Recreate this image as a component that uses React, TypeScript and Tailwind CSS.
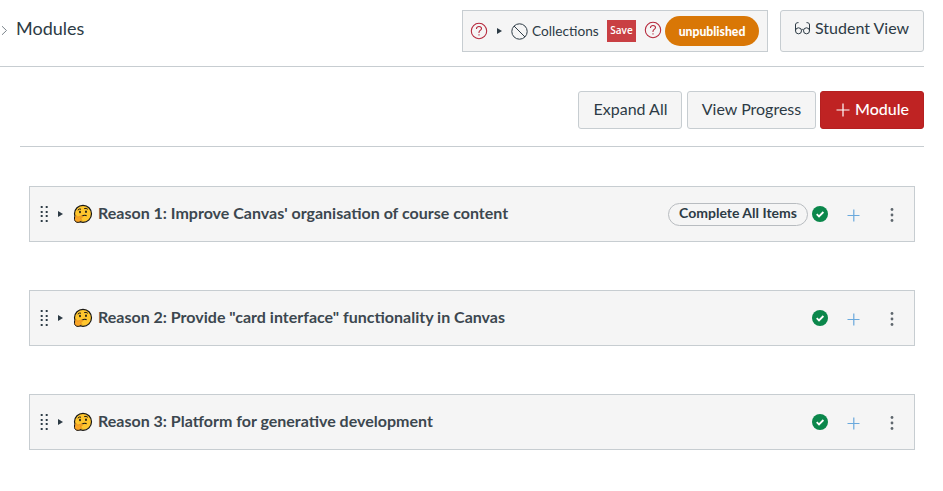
import React from "react";

const lato = "font-['Lato','Carlito',sans-serif]";

function Help() {
  return (
    <svg width="18" height="18" viewBox="0 0 18 18" fill="none" stroke="#b5273a" strokeWidth="1.05" className="block shrink-0">
      <circle cx="9" cy="9" r="7.7" />
      <path d="M6.5 7V6.6c0-1.3 1-2.1 2.5-2.1s2.5.8 2.5 2.1c0 1.8-2.5 1.9-2.5 3.7v.7" />
      <path d="M9 12.2v1.3" />
    </svg>
  );
}

function Caret() {
  return (
    <svg width="5" height="6" viewBox="0 0 5 6" className="block shrink-0">
      <path d="M0 0L5 3L0 6Z" fill="#2d3b45" />
    </svg>
  );
}

function Thinking() {
  return (
    <svg width="20" height="20" viewBox="0 0 20 20" className="block shrink-0">
      <circle cx="10" cy="9.8" r="8.5" fill="#ffc62e" stroke="#171717" strokeWidth="1.2" />
      <path d="M4.8 6.2Q6.2 4.4 8 5.2M11.2 4.6Q13.2 3.8 14.8 5.3" fill="none" stroke="#171717" strokeWidth="1" />
      <ellipse cx="7" cy="8" rx="0.9" ry="1.2" fill="#171717" />
      <ellipse cx="13" cy="7.8" rx="0.9" ry="1.2" fill="#171717" />
      <path d="M8.8 12.2Q11 10.8 13.6 11.6" fill="none" stroke="#171717" strokeWidth="1.1" />
      <path d="M2.4 12.3c.9-1.1 1.6-.7 1.8.9l4.8-1.3c1.2-.2 1.4 1 .4 1.4l-2 .8c1.2.3 1.3 1.3.6 2-.4 1.6-1.6 2.2-3.2 2.2-1.9 0-3.1-1.2-3.1-3z" fill="#f9a526" stroke="#e08a1e" strokeWidth="0.6" />
      <path d="M1.5 12.6v3c.3 1.7 1.7 2.9 3.6 2.8c1.600-.1 2.700-.5 3.500-1.600" fill="none" stroke="#171717" strokeWidth="1" />
    </svg>
  );
}

function Grip() {
  return (
    <svg width="8" height="16" viewBox="0 0 8 16" fill="#2d3b45" className="block shrink-0">
      {[0.5, 5.5].map((x) => [0, 5, 9, 14].map((y) => <rect key={`${x}-${y}`} x={x + 0.2} y={y} width="2" height="2" rx="0.5" />))}
    </svg>
  );
}

function Module({ title, complete }: { title: string; complete?: boolean }) {
  return (
    <div className="flex h-14 items-center border border-[#c7cdd1] bg-[#f5f5f5] pl-[10px] pr-5">
      <Grip />
      <span className="ml-[10px]"><Caret /></span>
      <span className="ml-[10px] pb-px"><Thinking /></span>
      <span className="ml-[5px] whitespace-nowrap pb-[2px] text-[16px] font-bold leading-6 text-[#3c474f]">{title}</span>
      <div className="ml-auto flex items-center">
        {complete && (
          <span className="mr-1 flex h-[23px] w-[140px] items-center justify-center whitespace-nowrap rounded-full border border-[#b8bcc0] pb-[3px] text-[14px] font-bold text-[#2d3b45]">
            Complete All Items
          </span>
        )}
        <svg width="16" height="16" viewBox="0 0 16 16" className="block">
          <circle cx="8" cy="8" r="8" fill="#0b874b" />
          <path d="M4.7 8.2L7 10.4L11.4 6" fill="none" stroke="white" strokeWidth="1.8" />
        </svg>
        <svg width="13" height="13" viewBox="0 0 13 13" className="mt-[2px] ml-[19px] block">
          <path d="M0.5 6.5H12.5M6.8 0.5V12.5" stroke="#6aa9dd" strokeWidth="1.2" />
        </svg>
        <svg width="4" height="14" viewBox="0 0 4 14" fill="#5f676e" className="mt-[2px] ml-[30px] block">
          <circle cx="2" cy="1.5" r="1.4" /><circle cx="2" cy="7" r="1.4" /><circle cx="2" cy="12.5" r="1.4" />
        </svg>
      </div>
    </div>
  );
}

export default function App() {
  return (
    <main className={`h-[491px] w-[943px] overflow-hidden bg-white text-[#2d3b45] ${lato}`}>
      <header className="flex h-[67px] w-[924px] items-start border-b border-[#c7cdd1] pt-[10px]">
        <svg width="8" height="12" viewBox="0 0 8 12" className="mt-[14px] block">
          <path d="M2 2.2L6.5 6.5L2 10.8" fill="none" stroke="#7c858c" strokeWidth="1" />
        </svg>
        <h1 className="ml-[8px] mt-[6px] text-[18px] leading-6">Modules</h1>
        <div className="ml-auto flex h-[42px] w-[306px] items-center border border-[#c7cdd1] bg-[#f5f5f5] pl-[7px]">
          <Help />
          <span className="ml-[9px]"><Caret /></span>
          <svg width="17" height="17" viewBox="0 0 17 17" fill="none" stroke="#2d3b45" strokeWidth="1" className="ml-[9px] block shrink-0">
            <circle cx="8.5" cy="8.5" r="7.7" /><path d="M3 3L14 14" />
          </svg>
          <span className="ml-1 w-[66px] whitespace-nowrap text-[13.7px]">Collections</span>
          <span className="ml-[9px] flex h-[22px] w-[29px] items-center justify-center bg-[#c93f43] pb-px font-['Open_Sans',sans-serif] text-[10px] font-semibold text-white">Save</span>
          <span className="-mt-[2px] ml-[8px]"><Help /></span>
          <span className="ml-[3px] flex h-[30px] w-[94px] items-center justify-center rounded-full bg-[#d97706] pt-[2px] text-[12.2px] font-black text-white">unpublished</span>
        </div>
        <button className="ml-3 flex h-[42px] w-[144px] items-center rounded-[3px] border border-[#c7cdd1] bg-[#f5f5f5] pb-[6px] pl-[13px] text-[16px]">
          <svg width="17" height="14" viewBox="0 0 17 14" fill="none" stroke="#2d3b45" strokeWidth="1" className="block shrink-0">
            <circle cx="4.5" cy="9.8" r="3" /><circle cx="12.5" cy="9.8" r="3" />
            <path d="M1.5 9.8V4C1.5 2.4 2.300 1.600 4.500 1.600M15.500 9.800V4C15.500 2.400 14.700 1.600 12.500 1.600M7.400 9Q8.500 7.800 9.600 9" />
          </svg>
          <span className="ml-1 whitespace-nowrap">Student View</span>
        </button>
      </header>
      <section className="ml-5 flex h-20 w-[904px] items-start justify-end border-b border-[#c7cdd1] pt-6 text-[16px]">
        <button className="h-[38px] w-[104px] rounded-[3px] border border-[#c7cdd1] bg-[#f5f5f5] pb-[2px] pl-px">Expand All</button>
        <button className="ml-[5px] h-[38px] w-[129px] rounded-[3px] border border-[#c7cdd1] bg-[#f5f5f5] pb-[2px]">View Progress</button>
        <button className="ml-1 flex h-[38px] w-[104px] items-center rounded-[3px] border border-[#b52020] bg-[#bf2323] pb-[2px] pl-[15px] text-white">
          <svg width="14" height="14" viewBox="0 0 14 14" className="mt-px block"><path d="M.5 7H13.5M7 .5V13.5" stroke="white" strokeWidth="1.2" /></svg>
          <span className="ml-[5px] font-medium">Module</span>
        </button>
      </section>
      <section className="ml-[29px] mt-[39px] flex w-[886px] flex-col gap-12">
        <Module title="Reason 1: Improve Canvas' organisation of course content" complete />
        <Module title={'Reason 2: Provide "card interface" functionality in Canvas'} />
        <Module title="Reason 3: Platform for generative development" />
      </section>
    </main>
  );
}
